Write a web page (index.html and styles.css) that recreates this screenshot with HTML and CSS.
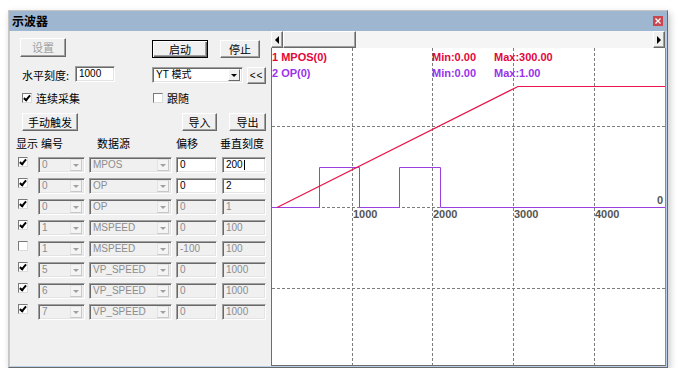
FILE: index.html
```html
<!DOCTYPE html>
<html lang="zh-CN">
<head>
  <meta charset="UTF-8" />
  <title>示波器</title>
  <link rel="stylesheet" href="styles.css">
</head>
<body>
  <div class="window">
    <div class="titlebar">
      <span class="title">示波器</span>
      <span class="close">
        <svg width="6" height="6" viewBox="0 0 6 6"><path d="M0.5 0.5 L5.5 5.5 M5.5 0.5 L0.5 5.5" stroke="#fff" stroke-width="1.3"/></svg>
      </span>
    </div>

    <div class="client">
      <!-- left: settings and channel table -->
      <div class="panel">
        <div class="row r1">
          <span class="btn off b-set">设置</span>
          <span class="btn def b-start">启动</span>
          <span class="btn b-stop">停止</span>
        </div>

        <div class="row r2">
          <span class="lbl">水平刻度:</span>
          <span class="edit e-scale">1000</span>
          <span class="edit combo c-mode"><span class="val">YT 模式</span><span class="drop"><i></i></span></span>
          <span class="btn b-back">&lt;&lt;</span>
        </div>

        <div class="row r3">
          <span class="grp g1"><span class="check on"></span><span class="ctext">连续采集</span></span>
          <span class="grp"><span class="check"></span><span class="ctext">跟随</span></span>
        </div>

        <div class="row r4">
          <span class="btn b-trig">手动触发</span>
          <span class="btn b-in">导入</span>
          <span class="btn b-out">导出</span>
        </div>

        <div class="grid thead">
          <span class="h1">显示</span>
          <span class="h2">编号</span>
          <span class="h3">数据源</span>
          <span class="h4">偏移</span>
          <span class="h5">垂直刻度</span>
        </div>

        <div class="grid tbody">
          <span class="check on"></span>
          <span class="edit combo off c-num"><span class="val">0</span><span class="drop"><i></i></span></span>
          <span class="edit combo off c-src"><span class="val">MPOS</span><span class="drop"><i></i></span></span>
          <span class="edit e-off">0</span>
          <span class="edit e-vs">200<b class="caret"></b></span>

          <span class="check on"></span>
          <span class="edit combo off c-num"><span class="val">0</span><span class="drop"><i></i></span></span>
          <span class="edit combo off c-src"><span class="val">OP</span><span class="drop"><i></i></span></span>
          <span class="edit e-off">0</span>
          <span class="edit e-vs">2</span>

          <span class="check on"></span>
          <span class="edit combo off c-num"><span class="val">0</span><span class="drop"><i></i></span></span>
          <span class="edit combo off c-src"><span class="val">OP</span><span class="drop"><i></i></span></span>
          <span class="edit off e-off">0</span>
          <span class="edit off e-vs">1</span>

          <span class="check on"></span>
          <span class="edit combo off c-num"><span class="val">1</span><span class="drop"><i></i></span></span>
          <span class="edit combo off c-src"><span class="val">MSPEED</span><span class="drop"><i></i></span></span>
          <span class="edit off e-off">0</span>
          <span class="edit off e-vs">100</span>

          <span class="check"></span>
          <span class="edit combo off c-num"><span class="val">1</span><span class="drop"><i></i></span></span>
          <span class="edit combo off c-src"><span class="val">MSPEED</span><span class="drop"><i></i></span></span>
          <span class="edit off e-off">-100</span>
          <span class="edit off e-vs">100</span>

          <span class="check on"></span>
          <span class="edit combo off c-num"><span class="val">5</span><span class="drop"><i></i></span></span>
          <span class="edit combo off c-src"><span class="val">VP_SPEED</span><span class="drop"><i></i></span></span>
          <span class="edit off e-off">0</span>
          <span class="edit off e-vs">1000</span>

          <span class="check on"></span>
          <span class="edit combo off c-num"><span class="val">6</span><span class="drop"><i></i></span></span>
          <span class="edit combo off c-src"><span class="val">VP_SPEED</span><span class="drop"><i></i></span></span>
          <span class="edit off e-off">0</span>
          <span class="edit off e-vs">1000</span>

          <span class="check on"></span>
          <span class="edit combo off c-num"><span class="val">7</span><span class="drop"><i></i></span></span>
          <span class="edit combo off c-src"><span class="val">VP_SPEED</span><span class="drop"><i></i></span></span>
          <span class="edit off e-off">0</span>
          <span class="edit off e-vs">1000</span>
        </div>
      </div>

      <!-- right: scope view -->
      <div class="scope">
        <div class="hscroll">
          <span class="sbtn"><i class="tri-l"></i></span>
          <span class="thumb"></span>
          <span class="track"></span>
          <span class="sbtn"><i class="tri-r"></i></span>
        </div>
        <div class="canvas">
          <svg class="plot" width="393" height="317" viewBox="0 0 393 317">
            <g class="gridlines">
              <line x1="80.5" y1="0" x2="80.5" y2="317"/>
              <line x1="160.5" y1="0" x2="160.5" y2="317"/>
              <line x1="241.5" y1="0" x2="241.5" y2="317"/>
              <line x1="322.5" y1="0" x2="322.5" y2="317"/>
              <line x1="0" y1="78.5" x2="393" y2="78.5"/>
              <line x1="0" y1="159.5" x2="393" y2="159.5"/>
              <line x1="0" y1="240.5" x2="393" y2="240.5"/>
            </g>
            <polyline class="tr-op" points="0,159.5 47.5,159.5 47.5,119.5 87.5,119.5 87.5,159.5 127.5,159.5 127.5,119.5 168.5,119.5 168.5,159.5 393,159.5"/>
            <polyline class="tr-pos" points="5,159.5 246,38.5 393,38.5"/>

            <text class="lg red" x="0" y="13">1 MPOS(0)</text>
            <text class="lg red" x="160" y="13">Min:0.00</text>
            <text class="lg red" x="222" y="13">Max:300.00</text>
            <text class="lg vio" x="0" y="29">2 OP(0)</text>
            <text class="lg vio" x="160" y="29">Min:0.00</text>
            <text class="lg vio" x="222" y="29">Max:1.00</text>

            <text class="ax" x="81" y="170">1000</text>
            <text class="ax" x="161" y="170">2000</text>
            <text class="ax" x="242" y="170">3000</text>
            <text class="ax" x="323" y="170">4000</text>
            <text class="ax" x="391" y="156" text-anchor="end">0</text>
          </svg>
        </div>
      </div>
    </div>
  </div>
</body>
</html>
```

FILE: styles.css
```css
body {
  margin: 0;
  background: #fff;
  font-family: "Liberation Sans", "Noto Sans CJK SC", sans-serif;
  font-size: 11px;
  color: #000;
}

.window {
  width: 660px;
  height: 358px;
  margin: 10px 0 0 8px;
  box-sizing: border-box;
  border: 1px solid;
  border-color: #c6c6c6 #6a6a6a #6a6a6a #c6c6c6;
  background: #b9cfe8;
  box-shadow: 2px 3px 7px rgba(0,0,0,0.22);
  display: flex;
  flex-direction: column;
}

.titlebar {
  height: 20px;
  background: #9fb6d0;
  display: flex;
  align-items: center;
  justify-content: space-between;
  padding: 0 4px 0 3px;
}
.title {
  font: bold 12px "Noto Sans CJK SC", sans-serif;
  line-height: 1;
}
.close {
  width: 10px;
  height: 10px;
  background: #c8474f;
  display: flex;
  align-items: center;
  justify-content: center;
}

.client {
  flex: 1;
  display: flex;
  margin: 0 1px 1px 1px;
}

/* left panel */
.panel {
  width: 261px;
  background: #f0f0f0;
  display: flex;
  flex-direction: column;
}
.row {
  display: flex;
}
.r1 { height: 20px; margin-top: 7px; padding-left: 10px; }
.r2 { height: 18px; margin-top: 8px; padding-left: 12px; }
.r3 { height: 12px; margin-top: 8px; padding-left: 12px; align-items: center; }
.r4 { height: 18px; margin-top: 9px; padding-left: 12px; }

.btn {
  box-sizing: border-box;
  height: 18px;
  display: flex;
  align-items: center;
  justify-content: center;
  background: #f0f0f0;
  border: 1px solid;
  border-color: #fff #696969 #696969 #fff;
  box-shadow: inset -1px -1px #a0a0a0;
  font-family: "Noto Sans CJK SC", sans-serif;
  font-size: 11px;
  line-height: 1;
}
.btn.off { color: #a0a0a0; }
.btn.def {
  border-color: #000;
  box-shadow: inset 1px 1px #fff, inset -1px -1px #696969, inset -2px -2px #a0a0a0;
}
.b-set { width: 46px; height: 19px; }
.b-start { width: 56px; margin: 2px 0 0 86px; }
.b-stop { width: 40px; margin: 2px 0 0 12px; }
.b-back {
  width: 19px;
  height: 17px;
  margin: 1px 0 0 4px;
  font-family: "Liberation Sans", sans-serif;
  font-size: 10px;
  letter-spacing: 1px;
}
.b-trig { width: 56px; }
.b-in { width: 35px; margin-left: 104px; }
.b-out { width: 37px; margin-left: 12px; }

.lbl {
  width: 53px;
  font-family: "Noto Sans CJK SC", sans-serif;
  font-size: 11px;
  line-height: 18px;
}

.edit {
  box-sizing: border-box;
  height: 16px;
  background: #fff;
  border: 1px solid;
  border-color: #a0a0a0 #fff #fff #a0a0a0;
  box-shadow: inset 1px 1px #696969, inset -1px -1px #e3e3e3;
  padding-left: 3px;
  display: flex;
  align-items: center;
  font-family: "Liberation Sans Narrow", "Liberation Sans", "Noto Sans CJK SC", sans-serif;
  font-size: 10px;
  line-height: 1;
  color: #000;
}
.edit.off {
  background: #f0f0f0;
  color: #8d8d8d;
}
.e-scale { width: 40px; }
.caret {
  display: inline-block;
  width: 1px;
  height: 10px;
  background: #000;
  margin-left: 1px;
}

.combo {
  justify-content: space-between;
  padding-right: 2px;
}
.combo .val { white-space: nowrap; }
.c-mode { width: 91px; margin: 1px 0 0 37px; }
.c-mode .val { font-family: "Liberation Sans", "Noto Sans CJK SC", sans-serif; font-size: 10px; }
.drop {
  box-sizing: border-box;
  width: 12px;
  height: 12px;
  background: #f0f0f0;
  border: 1px solid;
  border-color: #fff #696969 #696969 #fff;
  display: flex;
  align-items: center;
  justify-content: center;
}
.drop i {
  border-left: 3px solid transparent;
  border-right: 3px solid transparent;
  border-top: 3px solid #000;
}
.combo.off .drop {
  border-color: #e3e3e3 #c8c8c8 #c8c8c8 #e3e3e3;
  background: #f4f4f4;
}
.combo.off .drop i { border-top-color: #a0a0a0; }

.check {
  box-sizing: border-box;
  width: 10px;
  height: 10px;
  background: #fff;
  border: 1px solid;
  border-color: #7a7a7a #dcdcdc #dcdcdc #7a7a7a;
  position: relative;
}
.check.on::after {
  content: "";
  position: absolute;
  left: 2px;
  top: 0px;
  width: 2px;
  height: 5px;
  border: solid #000;
  border-width: 0 2px 2px 0;
  transform: rotate(40deg);
}
.grp { display: flex; align-items: center; }
.g1 { width: 131px; }
.ctext {
  margin-left: 4px;
  font-family: "Noto Sans CJK SC", sans-serif;
  font-size: 11px;
  line-height: 1;
}

/* channel table */
.grid {
  display: grid;
  grid-template-columns: 21px 51px 87px 46px 44px;
  padding-left: 7px;
}
.thead {
  height: 14px;
  margin-top: 5px;
  font-family: "Noto Sans CJK SC", sans-serif;
  font-size: 11px;
  line-height: 14px;
  white-space: nowrap;
}
.h1 { margin-left: -1px; }
.h2 { margin-left: 3px; }
.h3 { margin-left: 8px; }
.h5 { margin-left: -2px; }
.tbody {
  margin-top: 7px;
  grid-auto-rows: 16px;
  row-gap: 5px;
}
.tbody .check { align-self: start; margin-left: 1px; }
.c-num { width: 47px; }
.c-src { width: 83px; }
.e-off { width: 41px; }
.e-vs { width: 44px; }

/* scope view */
.scope {
  flex: 1;
  display: flex;
  flex-direction: column;
}
.hscroll {
  height: 17px;
  display: flex;
  background: #f5f5f5;
  margin-right: 1px;
}
.sbtn, .thumb {
  box-sizing: border-box;
  background: #f0f0f0;
  border: 1px solid;
  border-color: #fff #696969 #696969 #fff;
  box-shadow: inset -1px -1px #a0a0a0;
}
.sbtn {
  width: 12px;
  display: flex;
  align-items: center;
  justify-content: center;
}
.thumb { width: 73px; }
.track { flex: 1; }
.tri-l {
  border-top: 4px solid transparent;
  border-bottom: 4px solid transparent;
  border-right: 4px solid #000;
}
.tri-r {
  border-top: 4px solid transparent;
  border-bottom: 4px solid transparent;
  border-left: 4px solid #000;
}
.canvas {
  flex: 1;
  background: #fff;
  border-left: 1px solid #6d6d6d;
  border-right: 1px solid #8c8c8c;
  border-bottom: 1px solid #6d6d6d;
}
.plot { display: block; }
.gridlines line {
  stroke: #7c7c7c;
  stroke-width: 1;
  stroke-dasharray: 3 2;
}
.tr-op {
  fill: none;
  stroke: #9b3fe0;
  stroke-width: 1;
}
.tr-pos {
  fill: none;
  stroke: #e8164a;
  stroke-width: 1.2;
}
.lg {
  font-family: "Liberation Sans", sans-serif;
  font-size: 11px;
  font-weight: bold;
}
.red { fill: #e3063b; }
.vio { fill: #9a32ec; }
.ax {
  font-family: "Liberation Sans", sans-serif;
  font-size: 11px;
  font-weight: bold;
  fill: #555;
}
```
